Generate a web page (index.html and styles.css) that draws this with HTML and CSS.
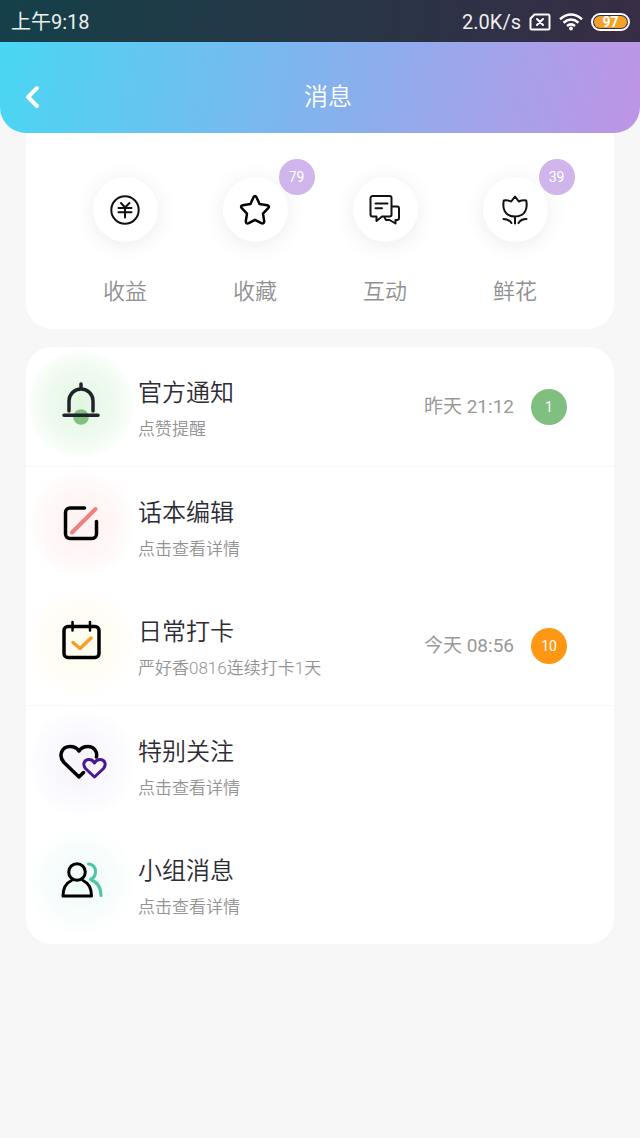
FILE: index.html
```
<!DOCTYPE html>
<html lang="zh-CN">
  <head>
    <meta charset="utf-8">
    <meta name="viewport" content="width=device-width, initial-scale=1">
    <title>消息</title>
    <link rel="stylesheet" href="styles.css">
  </head>
  <body>
    <header class="top">
      <div class="status">
        <span>上午9:18</span>
        <div class="status-right">
          <span>2.0K/s</span>
          <svg class="sim" width="22" height="18" viewBox="0 0 22 18">
            <path d="M5.500 1.500H19a1.500 1.500 0 0 1 1.500 1.500V15a1.500 1.500 0 0 1-1.500 1.500H3A1.500 1.500 0 0 1 1.500 15V5.500zM8 6l6 6M14 6l-6 6"/>
          </svg>
          <svg class="wifi" width="24" height="18" viewBox="0 0 24 18">
            <path d="M1 6.200Q12-3.200 23 6.200M4.500 9.700Q12 3.400 19.500 9.700M8 13Q12 9.800 16 13"/>
            <circle cx="12" cy="15.500" r="1.900"/>
          </svg>
          <span class="battery"><span>97</span></span>
        </div>
      </div>
      <div class="navbar">
        <button type="button" class="back" aria-label="返回">
          <svg width="16" height="24" viewBox="0 0 16 24"><path d="M13 3L4 12l9 9"/></svg>
        </button>
        <h1>消息</h1>
      </div>
    </header>

    <main>
      <nav class="card shortcuts">
        <a href="#income" class="shortcut">
          <span class="disc">
            <svg width="32" height="32" viewBox="0 0 32 32" class="ico thin">
              <circle cx="16" cy="16" r="13.700"/>
              <path d="M12 9l4 4.500L20.500 9M9.500 14h13M9.500 18.200h13M16 13.500v10"/>
            </svg>
          </span>
          <span class="name">收益</span>
        </a>
        <a href="#favorites" class="shortcut">
          <span class="disc">
            <svg width="32" height="32" viewBox="0 0 32 32" class="ico">
              <path d="M14.500 3.200Q16 1 17.500 3.200L20.500 10l7.700 1.200Q31 12 29.200 14.200L24 19.600l1.200 7.700Q25 30.200 22.300 29.200L16 25.800l-6.300 3.400Q7 30.200 6.800 27.300L8 19.600 2.800 14.200Q1 12 3.800 11.200L11.500 10z"/>
            </svg>
            <span class="badge">79</span>
          </span>
          <span class="name">收藏</span>
        </a>
        <a href="#interact" class="shortcut">
          <span class="disc">
            <svg width="32" height="32" viewBox="0 0 32 32" class="ico thin">
              <path d="M3.500 2h17a2 2 0 0 1 2 2v16.500a2 2 0 0 1-2 2H13L7.500 27v-4.500h-4a2 2 0 0 1-2-2V4a2 2 0 0 1 2-2zM6.500 9.500h12M6.500 14.200h6.500"/>
              <path d="M23 12.500h5a2 2 0 0 1 2 2V24a2 2 0 0 1-2 2h-1.500v3.500L20.500 26H17l-1.500-2.500"/>
            </svg>
          </span>
          <span class="name">互动</span>
        </a>
        <a href="#flowers" class="shortcut">
          <span class="disc">
            <svg width="32" height="32" viewBox="0 0 32 32" class="ico thin">
              <path d="M16 2.500L12.200 7.500Q8.500 5.800 4.800 6.500C3.500 13 4.500 22.500 16 22.500S28.500 13 27.200 6.500Q23.500 5.800 19.800 7.500zM16 22.500V29.500M4.500 25q5.500 0 8 4M27.500 25q-5.500 0-8 4"/>
            </svg>
            <span class="badge">39</span>
          </span>
          <span class="name">鲜花</span>
        </a>
      </nav>

      <section class="card messages">
        <a href="#notice" class="row line">
          <span class="glow green">
            <svg width="48" height="48" viewBox="0 0 48 48" class="ico thick">
              <circle cx="24" cy="37" r="7.800" class="dot"/>
              <path d="M12 31V21a12 12 0 0 1 24 0v10M24 8V4M7 35.300h34" stroke="#20232a"/>
            </svg>
          </span>
          <span class="text">
            <strong>官方通知</strong>
            <small>点赞提醒</small>
          </span>
          <time>昨天 21:12</time>
          <span class="badge count-green">1</span>
        </a>
        <a href="#script" class="row">
          <span class="glow red">
            <svg width="48" height="48" viewBox="0 0 48 48" class="ico thick">
              <path d="M27.500 8H13a4.500 4.500 0 0 0-4.500 4.500V34a4.500 4.500 0 0 0 4.500 4.500h22a4.500 4.500 0 0 0 4.500-4.500V21.500"/>
              <path d="M15 32.500L38.500 9" stroke="#f08080" stroke-width="4"/>
            </svg>
          </span>
          <span class="text">
            <strong>话本编辑</strong>
            <small>点击查看详情</small>
          </span>
        </a>
        <a href="#checkin" class="row line">
          <span class="glow yellow">
            <svg width="48" height="48" viewBox="0 0 48 48" class="ico thick">
              <rect x="7" y="7.500" width="35" height="31" rx="4"/>
              <path d="M15.500 3v8.500M33 3v8.500" stroke-width="2.500"/>
              <path d="M16 23.500l7 6L34 19" stroke="#f5a029"/>
            </svg>
          </span>
          <span class="text">
            <strong>日常打卡</strong>
            <small>严好香0816连续打卡1天</small>
          </span>
          <time>今天 08:56</time>
          <span class="badge count-orange">10</span>
        </a>
        <a href="#follow" class="row">
          <span class="glow purple">
            <svg width="48" height="48" viewBox="0 0 48 48" class="ico thick">
              <path d="M26.500 33.500L22 38 7 23.500C0.500 16 5.500 7.500 13 7.500c4 0 7 1.500 9 4.500 2-3 5-4.500 9-4.500 5.500 0 9.500 4.500 8.500 10.500"/>
              <path d="M37.500 38L28.500 29.500C25 25 27.500 20.500 32 20.500c2.500 0 4.500 1.500 5.500 3.500 1-2 3-3.500 5.500-3.500 4.500 0 7 4.500 3.500 9z" stroke="#4b1690" stroke-width="3"/>
            </svg>
          </span>
          <span class="text">
            <strong>特别关注</strong>
            <small>点击查看详情</small>
          </span>
        </a>
        <a href="#group" class="row">
          <span class="glow mint">
            <svg width="48" height="48" viewBox="0 0 48 48" class="ico">
              <g stroke-width="3">
                <circle cx="20" cy="14" r="8.300"/>
                <path d="M14.500 22.500C8 25.500 6 31 6 38h28.500c0-7-2-12.500-8.500-15.500"/>
                <path d="M31.500 6c9 1 9 12.500 2 15.500 7 2.500 10.500 7.500 10.500 16" stroke="#4fc4a7"/>
              </g>
            </svg>
          </span>
          <span class="text">
            <strong>小组消息</strong>
            <small>点击查看详情</small>
          </span>
        </a>
      </section>
    </main>
  </body>
</html>
```
FILE: styles.css
```
* { box-sizing: border-box; }
body {
  margin: 0;
  min-height: 100vh;
  background: #f7f7f7;
  color: #2c2c34;
  font-family: Roboto, "Noto Sans CJK SC", sans-serif;
  font-weight: 350;
}
a {
  color: inherit;
  text-decoration: none;
}
svg {
  display: block;
  overflow: visible;
  fill: none;
  stroke-linecap: round;
  stroke-linejoin: round;
}

/* header */
.top {
  overflow: hidden;
  border-radius: 0 0 26px 26px;
  background: linear-gradient(100deg, #48d7f4, #80b4ee 48%, #be94e6);
  color: #fff;
}
.status {
  display: flex;
  justify-content: space-between;
  align-items: center;
  height: 42px;
  padding: 2px 10px 0 11px;
  background: rgba(0, 0, 0, 0.7);
  color: #eee;
  font-size: 20px;
  font-weight: 400;
  line-height: 24px;
}
.status-right {
  display: flex;
  align-items: center;
  gap: 8px;
}
.sim, .wifi {
  stroke: #fff;
  stroke-width: 2;
}
.wifi { stroke-width: 2.500; stroke-linecap: butt; }
.wifi circle { fill: #fff; stroke: none; }
.battery {
  width: 39px;
  height: 18px;
  padding: 1px;
  border: 2px solid #fff;
  border-radius: 9px;
}
.battery span {
  display: block;
  height: 12px;
  border-radius: 6px;
  background: #f5a029;
  color: #fff;
  font: bold 14px/12px Roboto, sans-serif;
  text-align: center;
}
.navbar {
  display: grid;
  grid-template-columns: 64px 1fr 48px;
  align-items: center;
  height: 91px;
  padding-top: 18px;
}
.navbar h1 {
  margin: 0;
  font-size: 24px;
  font-weight: 350;
  line-height: 36px;
  text-align: center;
}
.back {
  padding: 0 24px;
  border: 0;
  background: none;
}
.back svg {
  stroke: #fff;
  stroke-width: 4;
}

/* cards */
main { padding: 0 26px; }
.card {
  background: #fff;
  border-radius: 26px;
}
.badge {
  width: 36px;
  height: 36px;
  border-radius: 50%;
  background: #d0b5ec;
  color: #fff;
  font-size: 14px;
  font-weight: 400;
  line-height: 37px;
  text-align: center;
}
.ico {
  stroke: #000;
  stroke-width: 2.500;
}
.ico.thin { stroke: #111; stroke-width: 2; }
.ico.thick { stroke-width: 3.500; }

/* shortcuts */
.shortcuts {
  display: grid;
  grid-template-columns: repeat(4, 1fr);
  padding: 44px 34px 21px;
  border-radius: 0 0 26px 26px;
}
.shortcut {
  display: flex;
  flex-direction: column;
  align-items: center;
  gap: 33px;
}
.disc {
  position: relative;
  display: grid;
  place-items: center;
  width: 65px;
  height: 65px;
  border-radius: 50%;
  background: #fff;
  box-shadow: 0 3px 22px rgba(0, 0, 0, 0.08);
}
.disc .badge {
  position: absolute;
  top: -18px;
  right: -27px;
}
.name {
  color: #909090;
  font-size: 22px;
  line-height: 33px;
}

/* message list */
.messages {
  margin-top: 18px;
  overflow: hidden;
}
.row {
  display: flex;
  align-items: center;
  height: 119px;
  padding-right: 47px;
}
.row.line {
  height: 120px;
  border-bottom: 1px solid #f7f7f7;
}
.glow {
  display: grid;
  place-items: center;
  width: 110px;
  height: 110px;
  margin: 0 2px 6px 0;
  border-radius: 50%;
}
.green { background: radial-gradient(closest-side, #e2f6e2, #effaef 60%, #f8fdf8 90%, #fff); }
.red { background: radial-gradient(closest-side, #fff1f1, #fff7f7 60%, #fffcfc 90%, #fff); }
.yellow { background: radial-gradient(closest-side, #fffbee, #fffdf5 60%, #fffefb 90%, #fff); }
.purple { background: radial-gradient(closest-side, #f7f3fc, #faf9fe 60%, #fdfdff 90%, #fff); }
.mint { background: radial-gradient(closest-side, #effbf8, #f7fdfc 60%, #fcfffe 90%, #fff); }
.dot { fill: #80c080; stroke: none; }
.text {
  flex: 1;
  display: flex;
  flex-direction: column;
  padding-top: 4px;
}
.text strong {
  font-size: 24px;
  font-weight: 350;
  line-height: 40px;
}
.text small {
  color: #939393;
  font-size: 17px;
  line-height: 32px;
}
time {
  margin-right: 17px;
  color: #999;
  font-size: 19px;
  font-weight: 400;
  line-height: 24px;
}
.count-green { background: #7fbf7f; }
.count-orange { background: #fd9714; }
```
